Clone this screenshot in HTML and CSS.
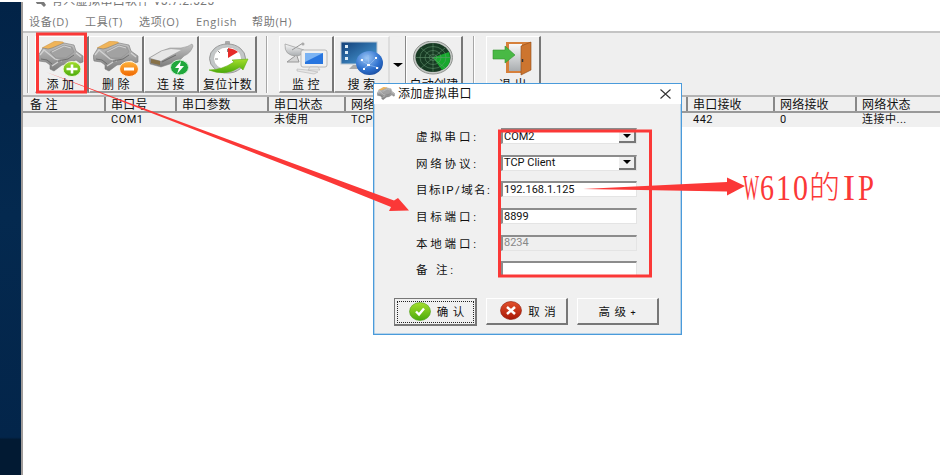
FILE: index.html
```
<!DOCTYPE html>
<html lang="zh-CN">
<head>
  <meta charset="UTF-8" />
  <title>虚拟串口软件</title>
  <link rel="stylesheet" href="styles.css">
</head>
<body>
  <svg width="0" height="0" class="defs">
    <defs>
      <linearGradient id="metal" x1="0" y1="0" x2="0" y2="1"><stop offset="0" stop-color="#c4c4c4"/><stop offset="1" stop-color="#7c7c7c"/></linearGradient>
      <linearGradient id="silver" x1="0" y1="0" x2="0" y2="1"><stop offset="0" stop-color="#f8f8f8"/><stop offset="1" stop-color="#a9adb0"/></linearGradient>
      <linearGradient id="blue" x1="0" y1="0" x2="1" y2="1"><stop offset="0" stop-color="#123f78"/><stop offset="1" stop-color="#4da2dd"/></linearGradient>
      <radialGradient id="ball" cx=".4" cy=".3" r=".8"><stop offset="0" stop-color="#9cc6f5"/><stop offset=".6" stop-color="#2f72cf"/><stop offset="1" stop-color="#164596"/></radialGradient>
      <linearGradient id="green" x1="0" y1="0" x2="0" y2="1"><stop offset="0" stop-color="#a5de2c"/><stop offset="1" stop-color="#4aaa0b"/></linearGradient>
      <linearGradient id="orange" x1="0" y1="0" x2="0" y2="1"><stop offset="0" stop-color="#ffb43c"/><stop offset="1" stop-color="#ee6500"/></linearGradient>
      <linearGradient id="red" x1="0" y1="0" x2="0" y2="1"><stop offset="0" stop-color="#e2512d"/><stop offset="1" stop-color="#a91806"/></linearGradient>
      <symbol id="plug" viewBox="0 0 46 36">
        <path d="M4 7 L17 0 L25 1 L27 4 L12 9Z" fill="#f0b459" stroke="#c89242" stroke-width=".5"/>
        <path d="M0 15 L5 7 L10 8 L14 7 L26 2 L36 4 L38 10 L45 15 L45 21 L42 22 L38 19 L31 23 L24 24 L16 30 L12 28 L12 24 L8 21 L1 20Z" fill="url(#metal)" stroke="#7a7a7a" stroke-width=".6"/>
        <path d="M12 11 L26 4 L34 6 L36 11 L28 17 L18 17Z" fill="#a2a2a2" stroke="#8a8a8a" stroke-width=".5"/>
        <path d="M14 11 L26 5 L33 7" fill="none" stroke="#d4d4d4" stroke-width="1"/>
        <path d="M2 14 L6 9 L17 18 L24 20 M14 25 L20 21 M38 12 L43 16" fill="none" stroke="#d2d2d2" stroke-width="1.300"/>
        <path d="M3 18 L9 19 L14 23 M20 20 L30 18 L36 14" fill="none" stroke="#636363" stroke-width=".8"/>
      </symbol>
    </defs>
  </svg>

  <div class="screen">
    <div class="desktop"></div>

    <div class="window">
      <div class="titlebar">
        <svg width="14" height="10" viewBox="0 0 14 10"><path d="M1 1h8l4 6-2 2-3-3H4z" fill="#7a7a7a"/></svg>
        <span>有人虚拟串口软件 V3.7.2.525</span>
      </div>

      <div class="menu">
        <span class="m1">设备(D)</span><span class="m2">工具(T)</span><span class="m3">选项(O)</span><span class="m4">English</span><span class="m5">帮助(H)</span>
      </div>

      <div class="toolbar">
        <i class="sep first"></i>
        <div class="tool add">
          <svg width="46" height="36"><use href="#plug" width="46" height="36"/><ellipse cx="34" cy="28" rx="9" ry="7.500" fill="url(#green)" stroke="#edf7d6"/><path d="M34 23.500v9M28.500 28h11" stroke="#fff" stroke-width="2.600"/></svg>
          <span>添 加</span>
        </div>
        <div class="tool del">
          <svg width="46" height="36"><use href="#plug" width="46" height="36"/><ellipse cx="36" cy="28" rx="9.500" ry="7.500" fill="url(#orange)" stroke="#fff0da"/><path d="M31 28h10" stroke="#fff" stroke-width="3"/></svg>
          <span>删 除</span>
        </div>
        <div class="tool conn">
          <svg width="46" height="36"><path d="M1 17 L13 10 L22 7 L33 7 Q40 6 44 3 L45 5 Q43 12 36 15 L31 20 L13 26 L2 23Z" fill="url(#metal)" stroke="#888" stroke-width=".5"/><path d="M2 17 L14 10 L23 8 L33 9 L20 16 L13 20Z" fill="#e6e6e6"/><path d="M3 18l9 2v4l-9-2z" fill="#877147"/><path d="M14 21l14-7" stroke="#6a6a6a" stroke-width="1"/><ellipse cx="31.500" cy="26.500" rx="9" ry="7.500" fill="#20a83c" stroke="#d1efd3"/><path d="M33 20l-6 7h4l-2 6 7-8h-4z" fill="#fff"/></svg>
          <span>连 接</span>
        </div>
        <div class="tool reset">
          <svg width="46" height="36"><rect x="20" y="0" width="5" height="4" rx="1" fill="#aaa"/><ellipse cx="22.500" cy="17.500" rx="18" ry="14.500" fill="#c3c7c8" stroke="#999"/><ellipse cx="22.500" cy="17.500" rx="14" ry="11.500" fill="#fff" stroke="#aaa" stroke-width=".7"/><path d="M22.500 8v3M10 18h3M13 10l2 2M32 10l-2 2" stroke="#888"/><path d="M23 17V7q7 1 10 4z" fill="#e62b28"/><path d="M4 29 Q17 29 29 21 L27 19 L43 18 L38 29 L35 26 Q20 36 4 29Z" fill="url(#green)" stroke="#61ae16" stroke-width=".6"/></svg>
          <span>复位计数</span>
        </div>
        <i class="sep mid"></i>
        <div class="tool mon">
          <svg width="46" height="36"><path d="M2 3 Q1 15 14 15 Q20 14 21 9Z" fill="url(#silver)" stroke="#999" stroke-width=".7"/><path d="M9 9l11-7M12 15l-8 6h12l-2-6" fill="#d5d5d5" stroke="#999"/><circle cx="20" cy="3" r="1.500" fill="#aaa"/><rect x="18" y="9" width="26" height="17" rx="2" fill="#f0f0f0" stroke="#aaa" stroke-width=".8"/><rect x="22" y="12" width="18" height="11" fill="#2775df"/><path d="M22 12h18l-18 9z" fill="#7bb3f3"/><path d="M27 26h8l2 3h-12zM14 28l10 1 11 2-4 2-17-3z" fill="#e6e6e6" stroke="#b3b3b3" stroke-width=".6"/></svg>
          <span>监 控</span>
        </div>
        <div class="tool search">
          <svg width="46" height="36"><rect x="2" y="1" width="36" height="22" fill="url(#blue)" stroke="#b9c6d2"/><path d="M6 4h3v3H6zM6 10h3v3H6zM6 16h3v3H6z" fill="#dcecf7"/><path d="M14 24h9l2 4H10z" fill="#aaa"/><ellipse cx="30.500" cy="22" rx="13.500" ry="12" fill="url(#ball)"/><path d="M21 19l9 5 8-8M24 28l6-4 10 3M30 24l-1-10" stroke="#9cc4f2" stroke-width=".6" fill="none"/><path d="M28 23h3v2h-3zM36 16h2v2h-2zM22 18h2v2h-2zM37 26h2v2h-2zM24 27h2v2h-2z" fill="#fff"/></svg>
          <span>搜 索</span>
        </div>
        <div class="drop"><i class="caret"></i></div>
        <div class="tool auto">
          <svg width="46" height="36"><ellipse cx="22" cy="16.500" rx="19.500" ry="16.500" fill="#c5c8c5" stroke="#8f938f"/><ellipse cx="22" cy="16.500" rx="17.500" ry="14.500" fill="#173a23"/><path d="M22 16.500L38 11Q42 24 31 29Z" fill="#17a82d"/><g fill="none" stroke="#6b9c76" stroke-width=".5"><ellipse cx="22" cy="16.500" rx="13" ry="11"/><ellipse cx="22" cy="16.500" rx="8" ry="7"/><ellipse cx="22" cy="16.500" rx="4" ry="3"/><path d="M5 16.500h34M22 2v29M10 7l24 20M34 7L10 27"/></g></svg>
          <span>自动创建</span>
        </div>
        <i class="sep last"></i>
        <div class="tool exit">
          <svg width="46" height="36"><path d="M16 1h25v27l-8 4H16z" fill="#d6803b"/><path d="M19 3h13v27H19z" fill="url(#silver)"/><path d="M31 5L41 1v28l-10 5z" fill="#cd752f" stroke="#8e4a17" stroke-width=".6"/><path d="M32.500 18v3" stroke="#333" stroke-width="1.500"/><path d="M3 9h12V5l10 9-10 8v-4H3z" fill="#49b945" stroke="#32912e" stroke-width=".6"/></svg>
          <span>退 出</span>
        </div>
      </div>

      <div class="grid head">
        <span>备 注</span><span>串口号</span><span>串口参数</span><span>串口状态</span><span>网络</span><span>串口接收</span><span>网络接收</span><span>网络状态</span>
      </div>
      <div class="grid row">
        <span></span><span>COM1</span><span></span><span>未使用</span><span>TCP</span><span>442</span><span>0</span><span>连接中...</span>
      </div>
    </div>

    <div class="dialog">
      <div class="dialog-title">
        <svg width="18" height="14" viewBox="0 0 46 33" preserveAspectRatio="none"><use href="#plug" width="46" height="36"/></svg>
        <span>添加虚拟串口</span>
        <svg class="close" width="11" height="10" viewBox="0 0 11 10"><path d="M.5 .5l10 9M10.500 .5l-10 9" stroke="#333" stroke-width="1.100"/></svg>
      </div>
      <div class="form">
        <label>虚拟串口:</label><div class="field">COM2<b><i class="caret"></i></b></div>
        <label>网络协议:</label><div class="field">TCP Client<b><i class="caret"></i></b></div>
        <label class="tight">目标IP/域名:</label><div class="field">192.168.1.125</div>
        <label>目标端口:</label><div class="field">8899</div>
        <label>本地端口:</label><div class="field off">8234</div>
        <label>备 注:</label><div class="field"></div>
      </div>
      <div class="buttons">
        <div class="btn ok"><svg width="22" height="19"><ellipse cx="11" cy="9.500" rx="10.500" ry="9" fill="url(#green)" stroke="#4a9c12" stroke-width=".6"/><path d="M7 9.500l3 3 5-6" fill="none" stroke="#fff" stroke-width="2.400"/></svg><span>确 认</span></div>
        <div class="btn cancel"><svg width="22" height="19"><ellipse cx="11" cy="9.500" rx="10.500" ry="9" fill="url(#red)" stroke="#8c1708" stroke-width=".6"/><path d="M7 6l8 7M15 6l-8 7" stroke="#fff" stroke-width="2.600"/></svg><span>取 消</span></div>
        <div class="btn more"><span>高 级 <small>+</small></span></div>
      </div>
    </div>

    <!-- red annotation marks -->
    <svg class="marks" width="940" height="475">
      <g fill="none" stroke="#fb3837" stroke-width="3">
        <rect x="37.500" y="34" width="48" height="58"/>
        <rect x="499.500" y="131" width="151" height="145"/>
      </g>
      <g fill="#fb3837">
        <path d="M46 72L330 177L394 200.500L398 198L409 210.500L389 211L391 207L330 182.500Z"/>
        <path d="M583 189L727 182V177.500L745 186L727 195.500V191.500Z"/>
        <text x="743" y="200" textLength="16" lengthAdjust="spacingAndGlyphs">W</text>
        <text x="760" y="200" textLength="14" lengthAdjust="spacingAndGlyphs">6</text>
        <text x="776" y="200" textLength="15" lengthAdjust="spacingAndGlyphs">1</text>
        <text x="793" y="200" textLength="15" lengthAdjust="spacingAndGlyphs">0</text>
        <text class="cjk" x="809" y="198">的</text>
        <text x="843" y="200" textLength="12" lengthAdjust="spacingAndGlyphs">I</text>
        <text x="858" y="200" textLength="16" lengthAdjust="spacingAndGlyphs">P</text>
      </g>
    </svg>
  </div>
</body>
</html>
```
FILE: styles.css
```
* {
  box-sizing: border-box;
  margin: 0;
  padding: 0;
}

body {
  width: 940px;
  height: 475px;
  overflow: hidden;
  background: #fff;
  font-family: Roboto, "Noto Sans CJK SC", sans-serif;
  font-size: 11px;
  color: #111;
  white-space: nowrap;
}

.defs { position: absolute; }
svg { display: block; flex: none; }

.screen {
  position: relative;
  display: flex;
  height: 475px;
  padding-top: 2px;
}

.desktop {
  width: 23px;
  background: linear-gradient(#022347, #04294f 45%, #03254a 92%, #021a33 92.500%);
  border-right: 2px solid #a09c9a;
}

.window { flex: 1; min-width: 0; }

.titlebar {
  display: flex;
  gap: 4px;
  height: 10px;
  padding-left: 10px;
  overflow: hidden;
  color: #777;
  font-size: 12px;
  line-height: 12px;
  letter-spacing: .35px;
}
.titlebar svg { margin-top: -4px; }
.titlebar span { margin-top: -7px; }

.menu {
  display: flex;
  height: 19px;
  padding-left: 6px;
  line-height: 19px;
  font-family: "Open Sans", "Noto Sans CJK SC", sans-serif;
  color: #777;
  letter-spacing: .7px;
}
.menu .m1 { width: 56px; }
.menu .m2 { width: 54px; }
.menu .m3 { width: 57px; }
.menu .m4 { width: 56px; }

/* toolbar */
.toolbar {
  display: flex;
  height: 66px;
  padding-top: 3px;
  background: #efefef;
  border-top: 2px solid #c4c4c4;
  border-bottom: 2px solid #b4b4b4;
}
.sep {
  width: 2px;
  height: 57px;
  border-left: 1px solid #a6a6a6;
  border-right: 1px solid #fff;
}
.sep.first { margin-left: 4px; margin-right: 6px; }
.sep.mid { margin: 0 11px 0 9px; }
.sep.last { margin: 0 11px 0 10px; }

.tool {
  display: flex;
  flex-direction: column;
  align-items: center;
  height: 57px;
  padding-top: 4px;
  border: 1px solid #fff;
  border-right: 2px solid #777;
  border-bottom: 2px solid #999;
}
.tool span {
  margin-top: 1px;
  font-size: 12px;
  line-height: 14px;
  letter-spacing: .3px;
}
.add { width: 54px; }
.add span { margin-right: 2px; }
.add svg { margin-right: 2px; }
.del, .conn { width: 55px; }
.reset { width: 58px; }
.mon { width: 55px; }
.search { width: 56px; border-right-color: #ddd; }
.auto { width: 57px; }
.exit { width: 55px; }
.drop {
  display: flex;
  align-items: center;
  justify-content: center;
  width: 16px;
  height: 57px;
  border-right: 1px solid #888;
}
.caret {
  width: 0;
  border: 4px solid transparent;
  border-top-color: #000;
  border-bottom: 0;
}
.drop .caret { border-width: 4px 5px 0; }

/* port list */
.grid {
  display: grid;
  grid-template-columns: 83px 71px 92px 77px 342px 87px 82px 1fr;
}
.grid span {
  overflow: hidden;
  padding-left: 5px;
}
.head {
  height: 16px;
  background: #efefef;
  border-bottom: 2px solid #999;
  font-size: 12px;
  line-height: 17px;
  letter-spacing: .2px;
}
.head span { border-right: 2px solid #888; height: 14px; }
.head span:last-child { border-right: 0; }
.head span:first-child { padding-left: 7px; }
.row {
  height: 14px;
  background: #f0f0f0;
  line-height: 14px;
  font-size: 11px;
  letter-spacing: .5px;
}
.row span { padding-left: 5px; }

/* add port dialog */
.dialog {
  position: absolute;
  left: 373px;
  top: 83px;
  width: 309px;
  height: 252px;
  background: #f0f0f0;
  border: 1px solid #4a9bdb;
  box-shadow: inset 0 0 0 .5px #7eb6e2;
}
.dialog-title {
  display: flex;
  align-items: center;
  height: 20px;
  padding: 0 10px 0 3px;
  background: #fff;
  font-size: 12px;
  letter-spacing: .3px;
}
.dialog-title span { margin-left: 3px; margin-top: -3px; }
.close { margin-left: auto; }

.form {
  display: grid;
  grid-template-columns: 85px 136px;
  grid-auto-rows: 26.600px;
  align-items: center;
  padding: 19px 0 0 42px;
}
.form label {
  font-size: 11.500px;
  letter-spacing: 2.800px;
}
.form .tight { letter-spacing: 1.400px; }
.field {
  display: flex;
  align-items: center;
  justify-content: space-between;
  height: 16px;
  padding-left: 1px;
  background: #fff;
  border: 1px solid #e4e4e4;
  border-top: 2px solid #8c8c8c;
  border-left: 2px solid #8c8c8c;
  font-size: 11px;
  line-height: 12px;
}
.field.off { background: #efefef; color: #888; }
.field b {
  display: flex;
  align-items: center;
  justify-content: center;
  width: 17px;
  height: 13px;
  background: #efefef;
  border-right: 2px solid #777;
  border-bottom: 2px solid #777;
}

.buttons {
  display: flex;
  gap: 9px;
  padding: 15px 0 0 20px;
}
.btn {
  display: flex;
  align-items: center;
  justify-content: center;
  gap: 6px;
  width: 82px;
  height: 27px;
  background: #f0f0f0;
  border: 1px solid #fff;
  border-right: 2px solid #777;
  border-bottom: 2px solid #777;
  font-size: 11.500px;
  letter-spacing: .8px;
}
.btn svg { margin-left: 4px; }
.btn small { font-size: 9px; }
.btn.ok {
  width: 83px;
  height: 28px;
  border: 1px solid #777;
  border-right-width: 2px;
  border-bottom-width: 2px;
  outline: 1px dotted #222;
  outline-offset: -4px;
}

.marks {
  position: absolute;
  left: 0;
  top: 0;
}
.marks text {
  font-family: "Liberation Serif", serif;
  font-size: 36px;
}
.marks .cjk {
  font-family: "Noto Sans CJK SC", sans-serif;
  font-size: 31px;
  font-weight: 300;
}
```
